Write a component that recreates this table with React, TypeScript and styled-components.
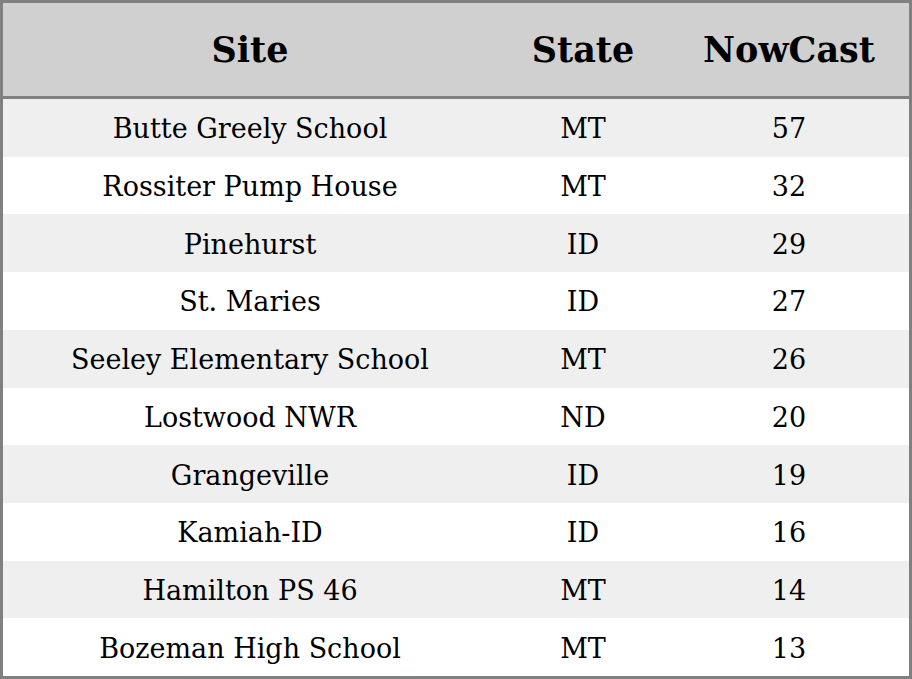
import React from "react";
import styled, { createGlobalStyle } from "styled-components";

const Global = createGlobalStyle`
  html, body { margin: 0; padding: 0; background: #fff; }
  body { font-family: "DejaVu Serif", serif; }
`;

const Table = styled.div`
  box-sizing: border-box;
  width: 912px;
  height: 679px;
  border: 3px solid #808080;
  display: flex;
  flex-direction: column;
`;

const Row = styled.div<{ $shade?: boolean }>`
  display: grid;
  grid-template-columns: 494px 172px 1fr;
  flex: 1;
  align-items: center;
  background: ${(p) => (p.$shade ? "#efefef" : "#ffffff")};
`;

const HeadRow = styled.div`
  display: grid;
  grid-template-columns: 494px 172px 1fr;
  height: 93px;
  flex: none;
  align-items: center;
  background: #d0d0d0;
  border-bottom: 3px solid #808080;
`;

const Th = styled.div`
  text-align: center;
  font-weight: bold;
  font-size: 35px;
  line-height: 1;
  color: #000;
`;

const Td = styled.div`
  text-align: center;
  font-size: 27px;
  line-height: 1;
  padding-top: 2px;
  color: #000;
`;

const data: [string, string, number][] = [
  ["Butte Greely School", "MT", 57],
  ["Rossiter Pump House", "MT", 32],
  ["Pinehurst", "ID", 29],
  ["St. Maries", "ID", 27],
  ["Seeley Elementary School", "MT", 26],
  ["Lostwood NWR", "ND", 20],
  ["Grangeville", "ID", 19],
  ["Kamiah-ID", "ID", 16],
  ["Hamilton PS 46", "MT", 14],
  ["Bozeman High School", "MT", 13],
];

export default function App() {
  return (
    <>
      <Global />
      <Table>
        <HeadRow>
          <Th>Site</Th>
          <Th>State</Th>
          <Th>NowCast</Th>
        </HeadRow>
        {data.map(([site, st, v], i) => (
          <Row key={site} $shade={i % 2 === 0}>
            <Td>{site}</Td>
            <Td>{st}</Td>
            <Td>{v}</Td>
          </Row>
        ))}
      </Table>
    </>
  );
}
